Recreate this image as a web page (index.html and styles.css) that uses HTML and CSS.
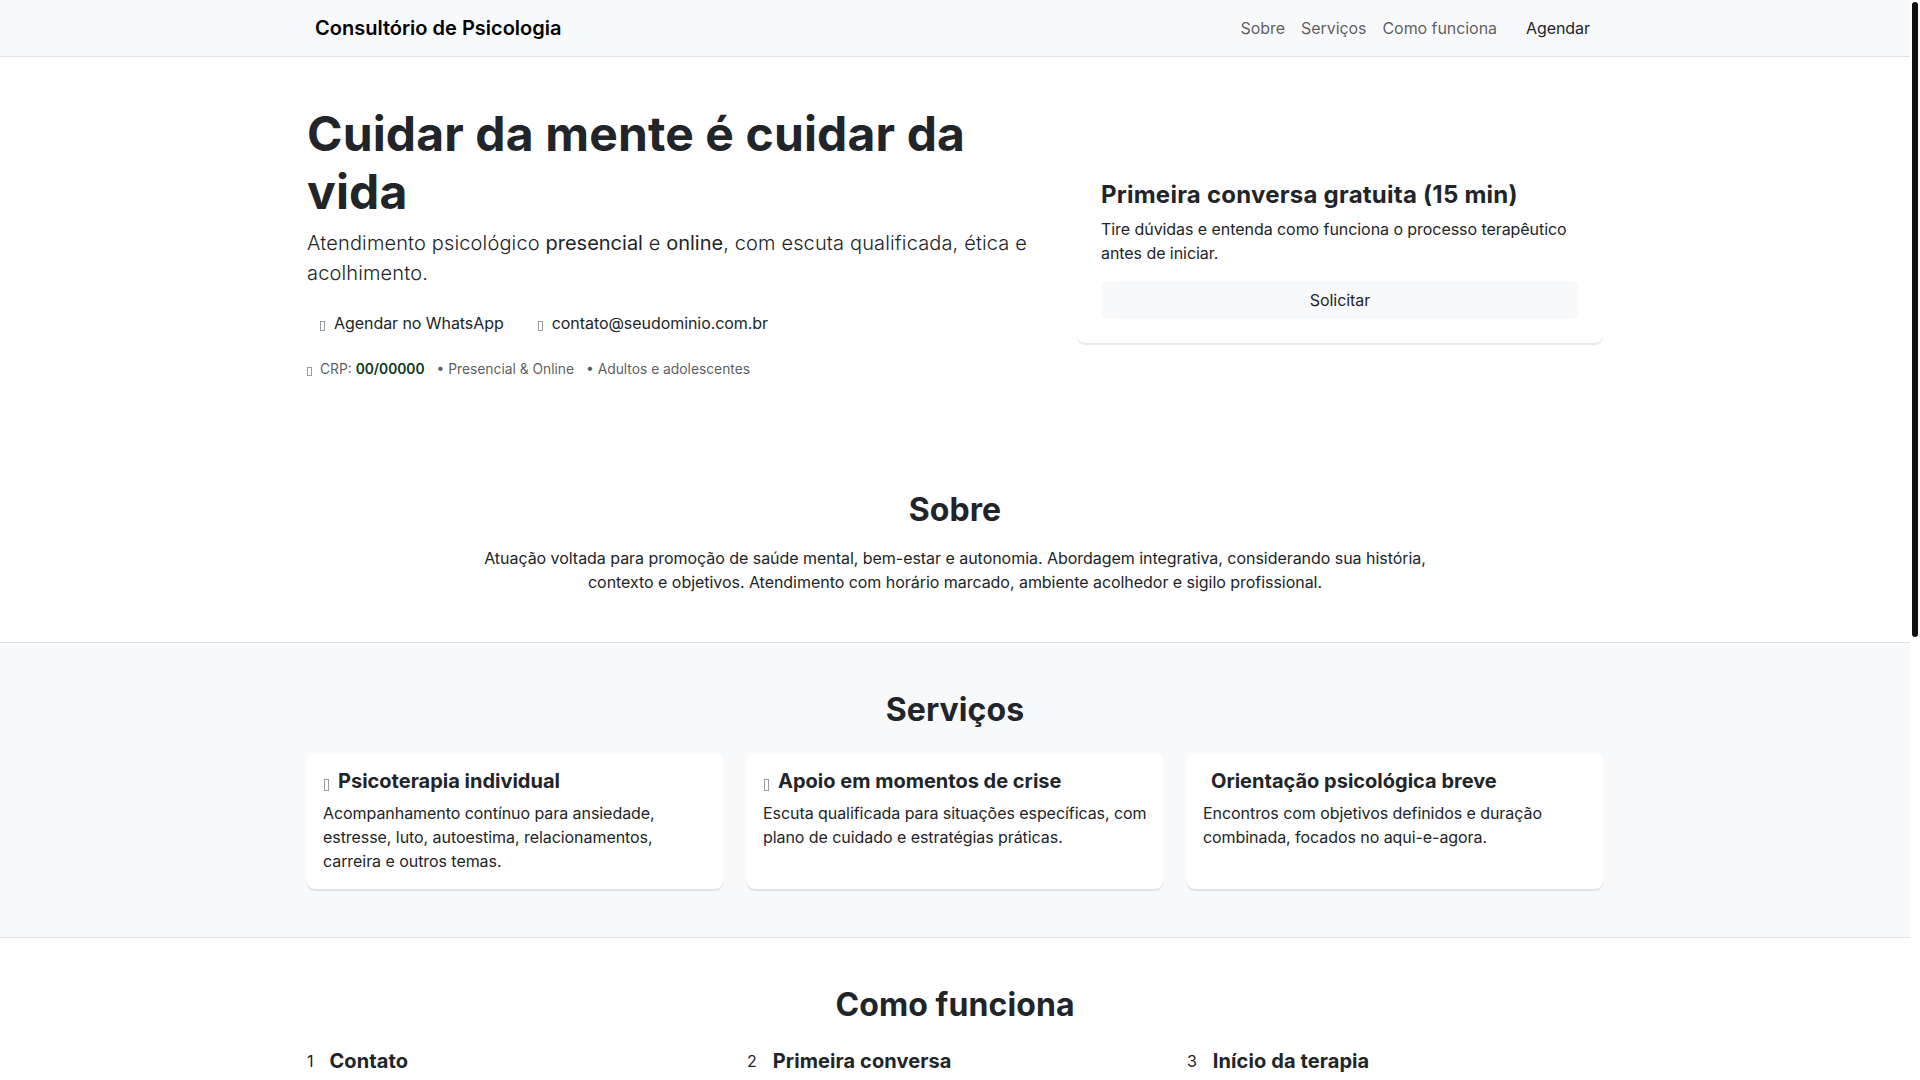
FILE: index.html
```html
<!DOCTYPE html>
<html lang="pt-BR">
<head>
    <meta charset="UTF-8">
    <meta name="viewport" content="width=device-width, initial-scale=1.0">
    <title>Consultório de Psicologia</title>
    <link rel="stylesheet" href="styles.css">
</head>
<body>
    <div class="page">
        <nav class="navbar">
            <div class="nav-inner">
                <a class="brand" href="#">Consultório de Psicologia</a>
                <div class="nav-links">
                    <a href="#sobre">Sobre</a>
                    <a href="#servicos">Serviços</a>
                    <a href="#como">Como funciona</a>
                    <a class="nav-cta" href="#agendar">Agendar</a>
                </div>
            </div>
        </nav>

        <header class="container hero">
            <div class="hero-text">
                <h1>Cuidar da mente é cuidar da vida</h1>
                <p class="lead">Atendimento psicológico <span class="lead-strong">presencial</span> e <span class="lead-strong">online</span>, com escuta qualificada, ética e acolhimento.</p>
                <div class="hero-actions">
                    <a class="btn" href="#"><span class="tofu"></span>Agendar no WhatsApp</a>
                    <a class="btn" href="#"><span class="tofu"></span>contato@seudominio.com.br</a>
                </div>
                <div class="hero-meta">
                    <span><span class="tofu tofu-small"></span>CRP: <strong>00/00000</strong></span>
                    <span>• Presencial &amp; Online</span>
                    <span>• Adultos e adolescentes</span>
                </div>
            </div>
            <div class="offer">
                <h2 class="offer-title">Primeira conversa gratuita (15 min)</h2>
                <p>Tire dúvidas e entenda como funciona o processo terapêutico antes de iniciar.</p>
                <a class="offer-btn" href="#">Solicitar</a>
            </div>
        </header>

        <section class="section" id="sobre">
            <div class="container">
                <h2>Sobre</h2>
                <p class="about">Atuação voltada para promoção de saúde mental, bem-estar e autonomia. Abordagem integrativa, considerando sua história, contexto e objetivos. Atendimento com horário marcado, ambiente acolhedor e sigilo profissional.</p>
            </div>
        </section>

        <section class="section section-alt" id="servicos">
            <div class="container">
                <h2>Serviços</h2>
                <div class="cols">
                    <div class="card">
                        <h3><span class="tofu tofu-big"></span>Psicoterapia individual</h3>
                        <p>Acompanhamento contínuo para ansiedade, estresse, luto, autoestima, relacionamentos, carreira e outros temas.</p>
                    </div>
                    <div class="card">
                        <h3><span class="tofu tofu-big"></span>Apoio em momentos de crise</h3>
                        <p>Escuta qualificada para situações específicas, com plano de cuidado e estratégias práticas.</p>
                    </div>
                    <div class="card">
                        <h3><span class="blank-icon"></span>Orientação psicológica breve</h3>
                        <p>Encontros com objetivos definidos e duração combinada, focados no aqui-e-agora.</p>
                    </div>
                </div>
            </div>
        </section>

        <section class="section" id="como">
            <div class="container">
                <h2>Como funciona</h2>
                <div class="cols">
                    <div class="step"><span class="step-num">1</span><h3>Contato</h3></div>
                    <div class="step"><span class="step-num">2</span><h3>Primeira conversa</h3></div>
                    <div class="step"><span class="step-num">3</span><h3>Início da terapia</h3></div>
                </div>
            </div>
        </section>
    </div>
    <div class="scrollbar"><div class="scrollbar-thumb"></div></div>
</body>
</html>
```

FILE: styles.css
```css
*{
    box-sizing: border-box;
}
html,body{
    height: 100%;
}
body{
    margin: 0;
    display: flex;
    overflow: hidden;
    font-family: Inter, "Liberation Sans", sans-serif;
    font-size: 16px;
    line-height: 1.5;
    letter-spacing: -0.06px;
    color: #212529;
    background: #fff;
}
a{
    color: inherit;
    text-decoration: none;
}
h1,h2,h3,p{
    margin: 0;
}
.page{
    flex: 1;
    min-width: 0;
}
.scrollbar{
    width: 10px;
    padding: 2px 2px 0;
}
.scrollbar-thumb{
    height: 635px;
    background: #111;
    border-radius: 3px;
}
.container{
    width: 1320px;
    margin: 0 auto;
    padding: 0 12px;
}

/* navbar */
.navbar{
    height: 57px;
    background: #f8f9fa;
    border-bottom: 1px solid #dee2e6;
}
.nav-inner{
    width: 1320px;
    height: 56px;
    margin: 0 auto;
    padding: 0 13px 0 20px;
    display: flex;
    align-items: center;
    justify-content: space-between;
}
.brand{
    font-size: 20px;
    font-weight: 600;
    letter-spacing: 0;
    color: #000;
}
.nav-links{
    display: flex;
    align-items: center;
}
.nav-links a{
    padding: 8px;
    color: rgba(0, 0, 0, 0.65);
}
.nav-links .nav-cta{
    margin-left: 9px;
    padding: 8px 12px;
    color: #212529;
}

/* hero */
.hero{
    display: flex;
    align-items: center;
    gap: 24px;
    padding-top: 48px;
    padding-bottom: 48px;
}
.hero-text{
    width: 746px;
    padding-bottom: 15px;
}
h1{
    font-size: 48px;
    font-weight: 700;
    line-height: 1.2;
    letter-spacing: 0.13px;
    margin-bottom: 8px;
}
.lead{
    font-size: 20px;
    font-weight: 300;
    letter-spacing: 0.14px;
    margin-bottom: 16px;
}
.lead-strong{
    font-weight: 400;
    letter-spacing: 0;
}
.hero-actions{
    display: flex;
    gap: 9px;
    margin-bottom: 17px;
}
.btn{
    display: block;
    padding: 7px 12px;
}
.hero-meta{
    display: flex;
    gap: 12px;
    font-size: 13.8px;
    line-height: 21px;
    letter-spacing: 0;
    color: rgba(33, 37, 41, 0.75);
}
.hero-meta strong{
    font-weight: 600;
    color: #0a3622;
}
.tofu{
    display: inline-block;
    width: 5px;
    height: 10px;
    margin: 0 9px 0 1px;
    border: 1px solid #9a9da0;
    vertical-align: -2px;
}
.tofu-small{
    height: 9px;
    margin: 0 8px 0 0;
}
.tofu-big{
    height: 12px;
    margin: 0 9px 0 1px;
    vertical-align: -3px;
}
.blank-icon{
    display: inline-block;
    width: 8px;
}
.offer{
    width: 526px;
    padding: 24px;
    border-radius: 8px;
    background: #fff;
    box-shadow: 0 2px 1px rgba(0, 0, 0, 0.09);
}
.offer-title{
    font-size: 24px;
    font-weight: 700;
    line-height: 1.2;
    letter-spacing: 0.24px;
    margin-bottom: 8px;
}
.offer p{
    margin-bottom: 16px;
}
.offer-btn{
    display: block;
    padding: 7px 12px;
    text-align: center;
    background: #f8f9fa;
    border-radius: 6px;
}

/* sections */
.section{
    padding: 48px 0;
    border-bottom: 1px solid #dee2e6;
}
.section-alt{
    background: #f8f9fa;
}
.section h2{
    font-size: 32px;
    font-weight: 700;
    line-height: 1.2;
    letter-spacing: 0.1px;
    text-align: center;
    margin-bottom: 16px;
}
.about{
    width: 960px;
    margin: 0 auto;
    letter-spacing: -0.04px;
    text-align: center;
}
.cols{
    display: grid;
    grid-template-columns: repeat(3, 1fr);
    gap: 24px;
}
#servicos h2{
    margin-bottom: 24px;
}
#como h2{
    margin-bottom: 25px;
}
.card{
    padding: 16px;
    border-radius: 8px;
    background: #fff;
    box-shadow: 0 2px 1px rgba(0, 0, 0, 0.09);
}
.card h3,.step h3{
    font-size: 20px;
    font-weight: 700;
    line-height: 1.2;
    letter-spacing: 0;
}
.step h3{
    letter-spacing: 0.1px;
}
.card h3{
    margin-bottom: 8px;
}
.step{
    display: flex;
    align-items: center;
    gap: 16px;
}
```
